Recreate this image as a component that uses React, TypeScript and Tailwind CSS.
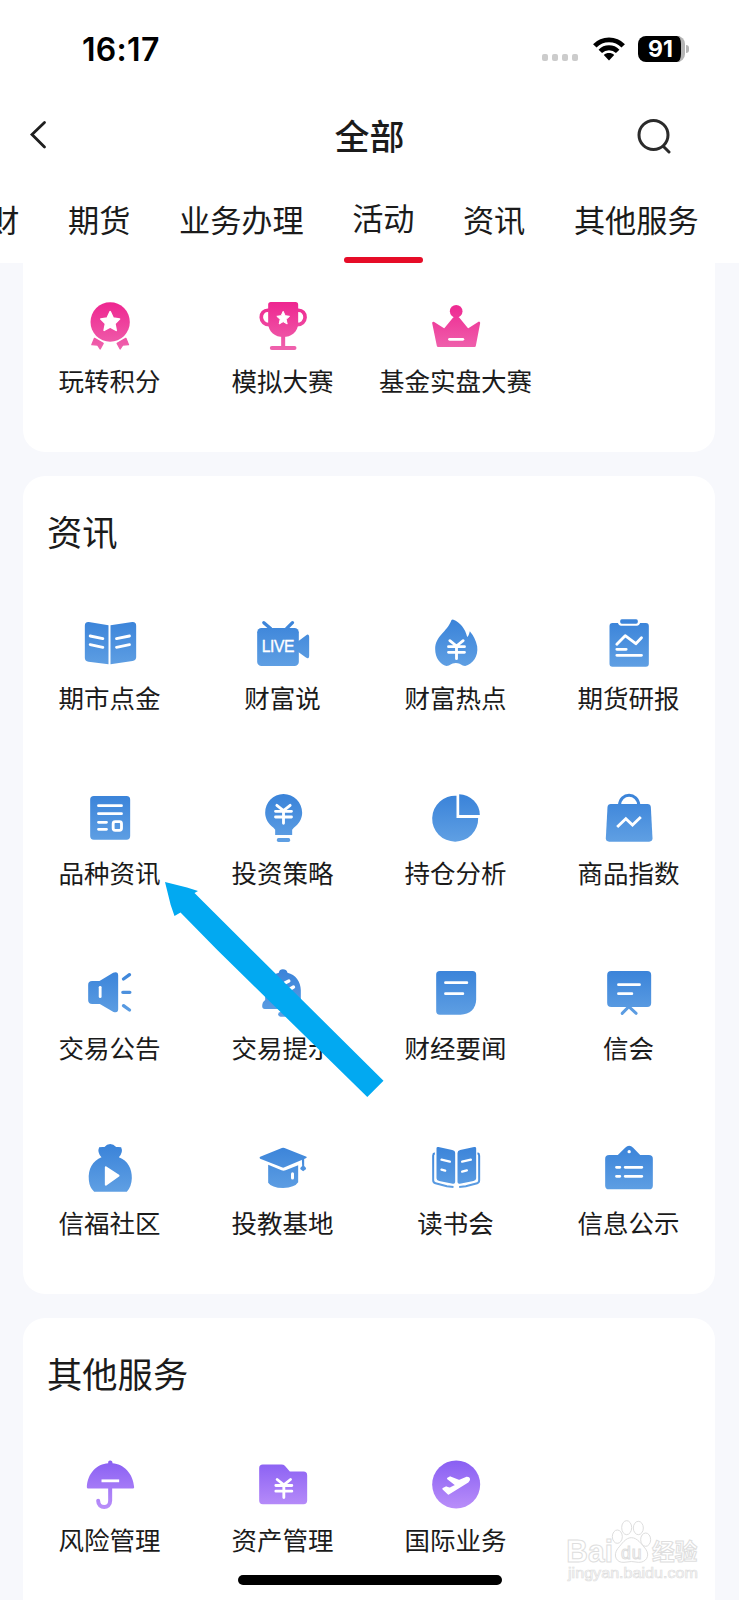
import type { ReactNode } from 'react';

type Tone = 'pink' | 'blue' | 'purple';

const TONES: Record<Tone, [string, string]> = {
  pink: ['#ee2690', '#ef62ad'],
  blue: ['#3a83d9', '#5f9fe3'],
  purple: ['#8a60f3', '#b98ef9'],
};

interface Item {
  label: string;
  x: number;
  art: (fill: string) => ReactNode;
}

const line = {
  fill: 'none',
  stroke: '#fff',
  strokeWidth: 8.5,
  strokeLinecap: 'round' as const,
  strokeLinejoin: 'round' as const,
};

function Yen({ x, y }: { x: number; y: number }) {
  return (
    <path
      {...line}
      strokeWidth={8.5}
      d={`M${x - 20} ${y - 26}L${x} ${y - 10}L${x + 20} ${y - 26}M${x - 24} ${y - 8}H${x + 24}M${x - 24} ${y + 9}H${x + 24}M${x} ${y - 10}V${y + 28}`}
    />
  );
}

const activities: Item[] = [
  {
    label: '玩转积分',
    x: 118.5,
    art: (f) => (
      <>
        <circle cx="210" cy="126" r="59" fill={f} />
        <path fill={f} stroke={f} strokeWidth="4" strokeLinejoin="round" d="M163 175L189 190L180 207L172 195L155 194ZM257 175L231 190L240 207L248 195L265 194Z" />
        <path fill="#fff" stroke="#fff" strokeWidth="5" strokeLinejoin="round" d="M210 95L219 114L238 117L224 131L228 151L210 141L192 151L196 131L182 117L201 114Z" />
      </>
    ),
  },
  {
    label: '模拟大赛',
    x: 637.5,
    art: (f) => (
      <>
        <path fill="none" stroke={f} strokeWidth="11" d="M686 91C655 88 655 136 690 134M772 91C803 88 803 136 768 134" />
        <path fill={f} d="M684 74Q684 66 692 66H766Q774 66 774 74V128C774 157 752 171 729 171S684 157 684 128Z" />
        <path stroke={f} strokeWidth="12" strokeLinecap="round" d="M729 165V200M695 204H763" />
        <path fill="#fff" stroke="#fff" strokeWidth="3" strokeLinejoin="round" d="M729 94L735 107L748 109L738 118L741 132L729 125L717 132L720 118L710 109L723 107Z" />
      </>
    ),
  },
  {
    label: '基金实盘大赛',
    x: 1156.5,
    art: (f) => (
      <>
        <circle cx="1248" cy="94" r="19" fill={f} />
        <path fill={f} stroke={f} strokeWidth="8" strokeLinejoin="round" d="M1180 129L1213 150L1242 115H1254L1283 150L1316 129L1303 197H1194Z" />
        <path {...line} d="M1228 178H1268" />
      </>
    ),
  },
];

const news: Item[] = [
  {
    label: '期市点金',
    x: 118.5,
    art: (f) => (
      <>
        <path fill={f} d="M134 77Q134 65 146 66L205 76V193L145 185Q134 183 134 174ZM288 77Q288 65 276 66L211 76V193L277 183Q288 181 288 172Z" />
        <path {...line} d="M150 108L188 116M150 134L188 142M229 116L268 108M229 142L268 134" />
      </>
    ),
  },
  {
    label: '财富说',
    x: 637.5,
    art: (f) => (
      <>
        <rect x="651" y="84" width="125" height="114" rx="13" fill={f} />
        <path fill={f} stroke={f} strokeWidth="6" strokeLinejoin="round" d="M774 128L800 108Q804 105 804 110V168Q804 175 799 170L774 152Z" />
        <path fill="none" stroke={f} strokeWidth="10" strokeLinecap="round" d="M671 68L692 86M757 68L739 86" />
        <text x="714" y="155" textAnchor="middle" textLength="98" fontSize="47" fill="#fff" stroke="#fff" strokeWidth="1" className="font-['Liberation_Sans',sans-serif]">LIVE</text>
      </>
    ),
  },
  {
    label: '财富热点',
    x: 166.5,
    art: (f) => (
      <>
        <path fill={f} d="M244 60Q247 57 250 59C268 66 286 85 291 111C296 108 297 101 299 94Q316 114 321 139C325 170 308 192 285 198C273 198 273 189 257 189S241 198 229 198C210 193 195 174 195 147C195 108 230 97 244 60Z" />
        <Yen x={259} y={148} />
      </>
    ),
  },
  {
    label: '期货研报',
    x: 685.5,
    art: (f) => (
      <>
        <path fill={f} d="M727 69H743Q746 77 752 77H801Q807 77 810 69H827Q836 69 836 78V191Q836 200 827 200H727Q718 200 718 191V78Q718 69 727 69Z" />
        <rect x="750" y="58" width="53" height="13" rx="5" fill={f} />
        <path {...line} d="M740 133L765 107L797 131L814 113M740 148H768M740 166H814" />
      </>
    ),
  },
  {
    label: '品种资讯',
    x: 118.5,
    art: (f) => (
      <>
        <rect x="150" y="63" width="120" height="131" rx="11" fill={f} />
        <path {...line} d="M175 92H244M175 116H244M175 142H199M175 163H199" />
        <rect x="219" y="140" width="25" height="26" rx="6" {...line} />
      </>
    ),
  },
  {
    label: '投资策略',
    x: 637.5,
    art: (f) => (
      <>
        <path fill={f} d="M730 57C761 57 786 82 786 113C786 131 776 147 761 158L756 164V180H705V164L700 158C685 147 675 131 675 113C675 82 699 57 730 57Z" />
        <rect x="710" y="189" width="40" height="12" rx="5" fill={f} />
        <Yen x={730} y={117} />
      </>
    ),
  },
  {
    label: '持仓分析',
    x: 166.5,
    art: (f) => (
      <>
        <path fill={f} d="M259 62V129H324A69 69 0 1 1 259 62Z" />
        <path fill={f} d="M267 58A62 62 0 0 1 329 120H267Z" />
      </>
    ),
  },
  {
    label: '商品指数',
    x: 685.5,
    art: (f) => (
      <>
        <path fill="none" stroke={f} strokeWidth="9" d="M748 91C749 51 804 51 806 91" />
        <path fill={f} d="M722 87H832Q841 87 842 96L847 190Q847 200 837 200H717Q707 200 707 190L712 96Q713 87 722 87Z" />
        <path {...line} strokeLinecap="butt" strokeLinejoin="miter" d="M741 156L767 131L787 150L812 126" />
      </>
    ),
  },
  {
    label: '交易公告',
    x: 118.5,
    art: (f) => (
      <>
        <path fill={f} d="M156 93H178L219 68Q234 63 234 76V178Q234 190 220 186L179 162H156Q144 162 144 151V104Q144 93 156 93Z" />
        <path fill="none" stroke={f} strokeWidth="10" strokeLinecap="round" d="M250 87L268 74M248 127H269M250 167L268 180" />
        <path {...line} d="M180 112V140" />
      </>
    ),
  },
  {
    label: '交易提示',
    x: 637.5,
    art: (f) => (
      <>
        <path fill={f} d="M716 68Q718 58 728 58Q739 58 742 68C766 74 782 94 782 121V150Q790 156 790 168Q790 177 781 177H674Q666 177 666 168Q666 156 675 150V121C675 95 692 74 716 68Z" />
        <rect x="714" y="186" width="29" height="14" rx="7" fill={f} />
        <path {...line} strokeWidth={10} d="M734 99L746 93M750 117L760 111" />
      </>
    ),
  },
  {
    label: '财经要闻',
    x: 166.5,
    art: (f) => (
      <>
        <path fill={f} d="M209 63H307Q318 63 318 74V148C318 176 299 194 271 194H209Q198 194 198 183V74Q198 63 209 63Z" />
        <path {...line} d="M226 98H290M226 131H278" />
      </>
    ),
  },
  {
    label: '信会',
    x: 685.5,
    art: (f) => (
      <>
        <rect x="711" y="63" width="132" height="108" rx="12" fill={f} />
        <path fill="none" stroke={f} strokeWidth="9" strokeLinecap="round" d="M776 170L756 190M776 170L798 190" />
        <path {...line} d="M745 104H808M745 131H785" />
      </>
    ),
  },
  {
    label: '信福社区',
    x: 118.5,
    art: (f) => (
      <>
        <path fill={f} d="M177 67Q184 65 193 66Q200 57 210 57T228 66Q237 65 243 67Q250 82 236 97C263 106 276 132 275 160Q274 186 260 200H162Q148 188 146 165C143 132 158 107 184 97Q170 82 177 67Z" />
        <path fill="#fff" stroke="#fff" strokeWidth="6" strokeLinejoin="round" d="M197 127L235 152L197 179Z" />
      </>
    ),
  },
  {
    label: '投教基地',
    x: 637.5,
    art: (f) => (
      <>
        <path fill={f} d="M660 95L725 69Q729 67 733 69L799 95Q801 98 797 100L733 127Q729 129 725 127L660 101Q656 98 660 95Z" />
        <path fill={f} d="M684 119L724 136Q730 138 736 136L774 121V172Q764 188 729 189Q694 188 684 173Z" />
        <path fill={f} d="M785 102L792 98V123Q798 127 798 132L789 139L780 132Q780 127 786 123Z" />
        <path {...line} strokeWidth={9} d="M757 146V159" />
      </>
    ),
  },
  {
    label: '读书会',
    x: 166.5,
    art: (f) => (
      <>
        <path fill={f} d="M199 70Q199 65 205 66L246 75Q255 77 255 84V171Q255 177 248 176L207 168Q199 166 199 160ZM318 70Q318 65 312 66L270 75Q262 77 262 84V171Q262 177 269 176L310 168Q318 166 318 160Z" />
        <path fill="none" stroke={f} strokeWidth="6" d="M194 85Q189 86 189 92V166Q189 173 196 175L230 184L250 186M322 85Q327 86 327 92V166Q327 173 321 175L287 184L267 186" />
        <path {...line} strokeWidth={7} d="M214 104L239 110M214 134L225 137M276 110L302 104M276 140L290 136" />
      </>
    ),
  },
  {
    label: '信息公示',
    x: 685.5,
    art: (f) => (
      <>
        <path fill={f} d="M717 90H743L765 68Q777 57 789 68L810 90H836Q848 90 848 101V182Q848 193 836 193H717Q705 193 705 182V101Q705 90 717 90Z" />
        <circle cx="777" cy="80" r="5" fill="#fff" />
        <path {...line} d="M739 127H749M765 127H815M739 154H749M765 154H815" />
      </>
    ),
  },
];

const services: Item[] = [
  {
    label: '风险管理',
    x: 118.5,
    art: (f) => (
      <>
        <path fill={f} d="M140 143C142 101 170 73 204 71Q203 63 210 63T217 71C250 73 279 101 282 143Q282 147 278 147H144Q140 147 140 143Z" />
        <path fill="none" stroke={f} strokeWidth="12" strokeLinecap="round" d="M210 146V184C210 209 174 209 174 184" />
        <path {...line} strokeLinecap="butt" d="M184 124H237" />
      </>
    ),
  },
  {
    label: '资产管理',
    x: 637.5,
    art: (f) => (
      <>
        <path fill={f} d="M668 75H724Q730 75 734 79L749 96H790Q801 96 801 107V183Q801 194 790 194H668Q657 194 657 183V86Q657 75 668 75Z" />
        <Yen x={731} y={146} />
      </>
    ),
  },
  {
    label: '国际业务',
    x: 1156.5,
    art: (f) => (
      <>
        <circle cx="1248" cy="135" r="72" fill={f} />
        <path fill="#fff" stroke="#fff" strokeWidth="5" strokeLinejoin="round" d="M1209 148L1218 143L1229 147L1248 137L1223 117L1230 113L1257 124L1280 114Q1288 114 1287 121L1283 127L1225 163Z" />
      </>
    ),
  },
];

function IconGrid({ items, tone, top }: { items: Item[]; tone: Tone; top: number }) {
  return (
    <div className="grid grid-cols-4 gap-y-[70.5px]">
      {items.map((item, i) => {
        const id = `${tone}-${i}`;
        return (
          <button key={item.label} type="button" className="flex flex-col items-center">
            <svg className="h-[60px] w-[60px]" viewBox={`${item.x + 1} ${top} 180 180`}>
              <defs>
                <linearGradient id={id} gradientUnits="userSpaceOnUse" x1="0" y1={top + 20} x2="0" y2={top + 160}>
                  <stop offset="0" stopColor={TONES[tone][0]} />
                  <stop offset="1" stopColor={TONES[tone][1]} />
                </linearGradient>
              </defs>
              {item.art(`url(#${id})`)}
            </svg>
            <span className="mt-[6px] mb-[2.5px] h-9 text-[25.5px] leading-9 whitespace-nowrap">{item.label}</span>
          </button>
        );
      })}
    </div>
  );
}

function StatusBar() {
  return (
    <div className="flex h-[98px] items-center justify-between pt-[2px] pr-[50px] pl-[82px]">
      <span className="font-['Inter',sans-serif] text-[32px] leading-none font-semibold tracking-[0.3px] text-black">16:17</span>
      <div className="-mt-[2px] flex items-center">
        <div className="mt-[17px] mr-[1px] flex gap-1">
          {[0, 1, 2, 3].map((n) => (
            <span key={n} className="h-[7px] w-[6px] rounded-[2px] bg-[#cccccc]" />
          ))}
        </div>
        <svg className="ml-[14px] h-6 w-8" viewBox="0 0 32 24">
          <path fill="none" stroke="#000" strokeWidth="4.8" d="M1.8 8.8C9.5 .8 22.5 .8 30.2 8.8M7.3 14.4C12 9.5 20 9.5 24.7 14.4" />
          <path d="M16 23.5L10.8 18C13.5 15.4 18.5 15.4 21.2 18Z" />
        </svg>
        <div className="ml-[13px] flex h-[26px] w-[47px] items-center justify-center overflow-hidden rounded-[8px] border-r-4 border-[#b5b5b5] bg-black pl-[2px] font-['Inter',sans-serif] text-[23px] leading-none font-bold text-white">91</div>
        <span className="ml-[1px] h-2 w-[3px] rounded-r-full bg-[#b5b5b5]" />
      </div>
    </div>
  );
}

const tabs = ['理财', '期货', '业务办理', '活动', '资讯', '其他服务'];

export default function App() {
  return (
    <div className="relative flex h-[1600px] w-[739px] flex-col overflow-hidden bg-[#f7f8fc] font-['Noto_Sans_CJK_SC',sans-serif] text-[#1b1b1b]">
      <header className="h-[263px] shrink-0 bg-white">
        <StatusBar />
        <div className="flex h-[76px] items-center justify-between pr-[67px] pl-[29px]">
          <svg className="-mt-[2px] h-[30px] w-[18px]" viewBox="0 0 18 30">
            <path d="M15.5 2.5L3 14.5L15.5 27" fill="none" stroke="#1f1f1f" strokeWidth="2.8" strokeLinecap="round" />
          </svg>
          <h1 className="-mt-[3px] ml-[56px] text-[35px] leading-[50px] font-medium">全部</h1>
          <svg className="h-[36px] w-[36px]" viewBox="0 0 36 36">
            <path d="M17.5 2.5A14.5 14.5 0 1 0 17.5 31.5A14.5 14.5 0 1 0 17.5 2.5M27 28L33 34" fill="none" stroke="#2b2b2b" strokeWidth="3" strokeLinecap="round" />
          </svg>
        </div>
        <nav className="-ml-[43px] flex h-[89px] gap-[48.6px] text-[31.2px] leading-[44px] whitespace-nowrap">
          {tabs.map((tab) =>
            tab === '活动' ? (
              <div key={tab} className="-mx-[8.5px] flex flex-col items-center justify-between pt-[21px]">
                <span>{tab}</span>
                <span className="h-[6px] w-[79px] rounded-full bg-[#e60c28]" />
              </div>
            ) : (
              <div key={tab} className="pt-[23px]">{tab}</div>
            ),
          )}
        </nav>
      </header>

      <main className="flex flex-col gap-6 px-[23px] pr-6">
        <section className="h-[189px] shrink-0 rounded-b-[22px] bg-white pt-[33px]">
          <IconGrid items={activities} tone="pink" top={48} />
        </section>
        <section className="h-[818px] shrink-0 rounded-[22px] bg-white pt-[30px]">
          <h2 className="mb-[57px] pl-6 text-[35.3px] leading-[50px]">资讯</h2>
          <IconGrid items={news} tone="blue" top={39} />
        </section>
        <section className="h-[300px] shrink-0 rounded-t-[22px] bg-white pt-[30px]">
          <h2 className="mb-[57px] pl-6 text-[35.3px] leading-[50px]">其他服务</h2>
          <IconGrid items={services} tone="purple" top={46.5} />
        </section>
      </main>

      <svg className="absolute top-[870px] left-[150px] h-[240px] w-[250px]" viewBox="150 870 250 240">
        <path fill="#02a9f1" d="M165 882L187 887.5L198 891L194.5 893L251.7 950L383.5 1080.7L367.3 1097L217.3 950L180.5 912.5L174.5 916L170.7 905Z" />
      </svg>

      <svg className="absolute top-[1515px] left-[560px] h-[75px] w-[145px]" viewBox="60 105 435 225">
        <g fill="#fff" stroke="#dedede" strokeWidth="3">
          <text x="79" y="246" fontSize="92" fontWeight="700" textLength="140" lengthAdjust="spacingAndGlyphs" className="font-['Liberation_Sans',sans-serif]">Bai</text>
          <ellipse cx="232" cy="170" rx="15" ry="20" />
          <ellipse cx="260" cy="143" rx="15" ry="21" />
          <ellipse cx="295" cy="144" rx="15" ry="20" />
          <ellipse cx="317" cy="179" rx="15" ry="20" />
          <path d="M274 173C292 173 304 192 317 207C332 228 317 248 296 247Q274 242 252 247C229 249 218 226 233 206C246 191 257 173 274 173Z" />
          <text x="243" y="236" fontSize="53" textLength="62" className="font-['Liberation_Sans',sans-serif]">du</text>
          <text x="336" y="239" fontSize="68" fontWeight="700" textLength="136">经验</text>
          <text x="84" y="295" fontSize="43" strokeWidth="2" textLength="390" lengthAdjust="spacingAndGlyphs" className="font-['Liberation_Sans',sans-serif]">jingyan.baidu.com</text>
        </g>
      </svg>

      <div className="absolute top-[1575px] left-[238px] h-[10px] w-[264px] rounded-full bg-black" />
    </div>
  );
}
